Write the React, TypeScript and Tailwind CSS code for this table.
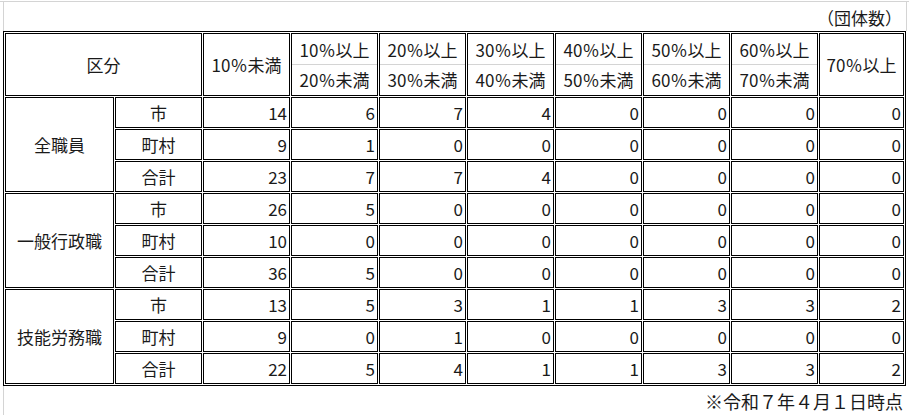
import React from "react";

const ranges: [string, string][] = [
  ["10％以上", "20％未満"],
  ["20％以上", "30％未満"],
  ["30％以上", "40％未満"],
  ["40％以上", "50％未満"],
  ["50％以上", "60％未満"],
  ["60％以上", "70％未満"],
];

type Row = [string, number[]];

const groups: { label: string; rows: Row[] }[] = [
  {
    label: "全職員",
    rows: [
      ["市", [14, 6, 7, 4, 0, 0, 0, 0]],
      ["町村", [9, 1, 0, 0, 0, 0, 0, 0]],
      ["合計", [23, 7, 7, 4, 0, 0, 0, 0]],
    ],
  },
  {
    label: "一般行政職",
    rows: [
      ["市", [26, 5, 0, 0, 0, 0, 0, 0]],
      ["町村", [10, 0, 0, 0, 0, 0, 0, 0]],
      ["合計", [36, 5, 0, 0, 0, 0, 0, 0]],
    ],
  },
  {
    label: "技能労務職",
    rows: [
      ["市", [13, 5, 3, 1, 1, 3, 3, 2]],
      ["町村", [9, 0, 1, 0, 0, 0, 0, 0]],
      ["合計", [22, 5, 4, 1, 1, 3, 3, 2]],
    ],
  },
];

const cell = "border border-black flex items-center";

export default function App() {
  return (
    <div
      className="w-[909px] h-[415px] bg-white overflow-hidden text-[17px] leading-[20px] text-[#1a1a1a]"
      style={{ fontFamily: '"Noto Sans CJK JP", "Noto Sans", sans-serif' }}
    >
      {/* sheet gridline */}
      <div className="h-[2px] border-b border-[#d4d4d4]" />

      {/* unit caption */}
      <div className="ml-[3px] w-[904px] h-[29px] border-l border-r border-[#d4d4d4] flex items-center justify-end pt-[3px] pr-[4px]">
        （団体数）
      </div>

      {/* TABLE */}
      <div className="ml-[3px] w-[903px] border border-black p-[1px] grid gap-[1px] grid-cols-[109px_repeat(8,87px)_85px] grid-rows-[63px_repeat(9,31px)]">
        <div className={`${cell} col-span-2 justify-center`}>区分</div>
        <div className={`${cell} justify-center`}>10％未満</div>
        {ranges.map(([top, bottom]) => (
          <div key={top} className="border border-black flex flex-col">
            <div className="h-[31px] border-b border-[#d4d4d4] flex items-center justify-center pt-[1px]">
              {top}
            </div>
            <div className="flex-1 flex items-center justify-center">{bottom}</div>
          </div>
        ))}
        <div className={`${cell} justify-center`}>70％以上</div>

        {groups.map((g) => (
          <React.Fragment key={g.label}>
            <div className={`${cell} row-span-3 justify-center`}>{g.label}</div>
            {g.rows.map(([name, values]) => (
              <React.Fragment key={name}>
                <div className={`${cell} justify-center`}>{name}</div>
                {values.map((v, i) => (
                  <div key={i} className={`${cell} justify-end pr-[2px]`}>
                    {v}
                  </div>
                ))}
              </React.Fragment>
            ))}
          </React.Fragment>
        ))}
      </div>

      {/* note */}
      <div className="ml-[3px] h-[29px] border-l border-[#d4d4d4] flex items-center justify-end pr-[6px] text-[18px]">
        ※令和７年４月１日時点
      </div>
    </div>
  );
}
